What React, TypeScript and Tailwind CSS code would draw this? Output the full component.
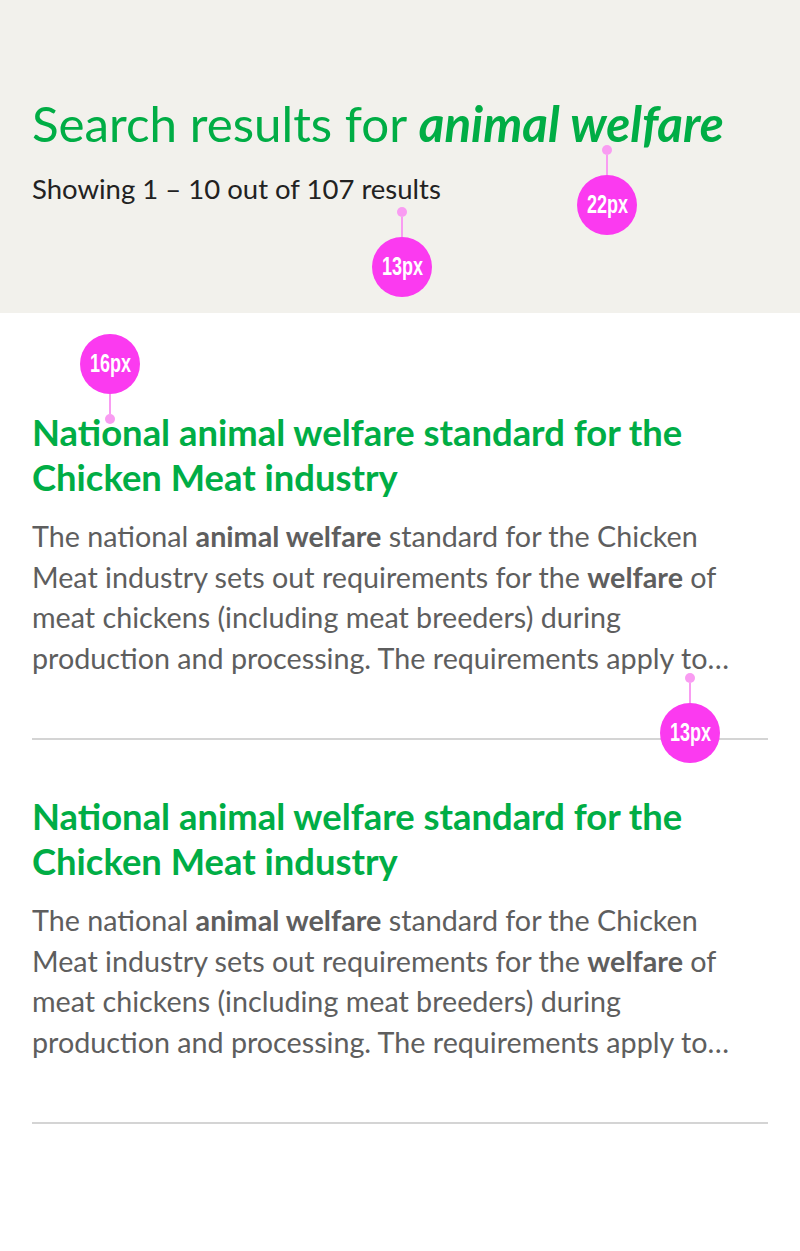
const results = [1, 2];

// design annotation: pink circle with a pin pointing at the measured text
const Note = ({ label, down, className }: { label: string; down?: boolean; className: string }) => (
  <div className={`absolute flex items-center ${down ? 'flex-col' : 'flex-col-reverse'} ${className}`}>
    <div className="w-[60px] h-[60px] rounded-full bg-[#fb3af0] flex items-center justify-center">
      <span className="text-white text-[25px] font-bold scale-x-[0.72] [font-family:'Liberation_Sans',sans-serif]">
        {label}
      </span>
    </div>
    <div className="w-[2px] h-[20px] bg-[#f99cf2]" />
    <div className="w-[10px] h-[10px] rounded-full bg-[#f99cf2]" />
  </div>
);

export default function App() {
  return (
    <div className="w-[800px] min-h-[1251px] bg-white [font-family:Lato,'Noto_Sans',sans-serif]">
      <header className="relative bg-[#f2f1ec] h-[313px] px-8 pt-[94px]">
        <h1 className="text-[49.3px] leading-[58px] text-[#00ad45] whitespace-nowrap">
          Search results for <em className="font-bold">animal welfare</em>
        </h1>
        <p className="mt-[20px] text-[27.5px] leading-[34px] text-[#222]">Showing 1 – 10 out of 107 results</p>
        <Note label="22px" className="left-[577px] top-[145px]" />
        <Note label="13px" className="left-[372px] top-[207px]" />
      </header>

      <main className="px-8 pt-[97px] flex flex-col gap-[54px]">
        {results.map((r, i) => (
          <article key={r} className="relative border-b-2 border-[#d4d4d4] pb-[60px]">
            <h2 className="text-[36.4px] leading-[45px] font-bold text-[#00ad45]">
              National animal welfare standard for the
              <br />
              Chicken Meat industry
            </h2>
            <p className="mt-[16px] text-[28.7px] leading-[40.5px] text-[#5e5e5e]">
              The national <b>animal welfare</b> standard for the Chicken
              <br />
              Meat industry sets out requirements for the <b>welfare</b> of
              <br />
              meat chickens (including meat breeders) during
              <br />
              production and processing. The requirements apply to…
            </p>
            {i === 0 && (
              <>
                <Note label="16px" down className="left-[48px] top-[-76px]" />
                <Note label="13px" className="left-[628px] top-[263px]" />
              </>
            )}
          </article>
        ))}
      </main>
    </div>
  );
}
